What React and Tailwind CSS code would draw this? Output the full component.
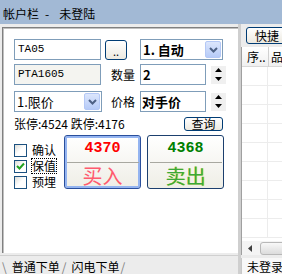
import React from "react";

const F = "font-['Noto_Sans_CJK_SC',sans-serif]";

function XPButton({ className = "", children }) {
  return (
    <div
      className={`flex items-center justify-center rounded-[3px] border border-[#003c74] bg-gradient-to-b from-white to-[#ece9e0] ${className}`}
    >
      {children}
    </div>
  );
}

function Chevron() {
  return (
    <svg width="9" height="6" viewBox="0 0 9 6">
      <path d="M1 1 L4.5 4.5 L8 1" stroke="#4d6185" strokeWidth="2" fill="none" />
    </svg>
  );
}

function Select({ className = "", text, bold }) {
  return (
    <div className={`flex h-[21px] items-center border border-[#7f9db9] bg-white ${className}`}>
      <span className={`flex-1 pl-[2px] text-[13px] leading-none text-black ${bold ? "font-bold" : ""}`}>{text}</span>
      <div className="mr-[1px] flex h-[17px] w-[16px] items-center justify-center rounded-[2px] border border-[#b4c8f6] bg-gradient-to-b from-[#dce6fc] to-[#b6cbf8]">
        <Chevron />
      </div>
    </div>
  );
}

function Spinner() {
  return (
    <div className="ml-[5px] flex h-[20px] w-[15px] flex-col justify-between py-[1px]">
      <div className="flex h-[9px] items-center justify-center bg-[#f0f0f0]">
        <svg width="7" height="4" viewBox="0 0 7 4">
          <path d="M3.5 0 L7 4 L0 4 Z" fill="#000" />
        </svg>
      </div>
      <div className="flex h-[9px] items-center justify-center bg-[#f0f0f0]">
        <svg width="7" height="4" viewBox="0 0 7 4">
          <path d="M0 0 L7 0 L3.5 4 Z" fill="#000" />
        </svg>
      </div>
    </div>
  );
}

function Checkbox({ checked, label, focus }) {
  return (
    <div className="flex h-[16px] items-center">
      <div className="flex h-[13px] w-[13px] items-center justify-center border border-[#1c5180] bg-gradient-to-br from-[#dcdcd7] via-white to-white">
        {checked && (
          <svg width="9" height="9" viewBox="0 0 9 9">
            <path d="M1 4 L3.5 6.5 L8 1.5" stroke="#21a121" strokeWidth="2" fill="none" />
          </svg>
        )}
      </div>
      <span
        className={`ml-[5px] text-[12px] leading-[14px] text-black ${
          focus ? "outline outline-1 outline-dotted outline-black" : ""
        }`}
      >
        {label}
      </span>
    </div>
  );
}

function TradeButton({ price, label, priceColor, labelClass, focus }) {
  return (
    <div
      className={`flex h-[54px] w-[77px] flex-col items-center rounded-[3px] border bg-gradient-to-b from-white to-[#efeee6] ${
        focus ? "border-[#2a4f9c] shadow-[inset_0_0_0_2px_#94b4f0]" : "border-[#1c3f6e]"
      }`}
    >
      <div className={`mt-[6px] h-[14px] font-['Liberation_Mono',monospace] text-[15px] font-bold leading-[14px] ${priceColor}`}>
        {price}
      </div>
      <div className="mt-[6px] h-px w-[72px] bg-[#a8a8a0]" />
      <div className={`mt-[2px] text-[20px] leading-[22px] ${labelClass}`}>{label}</div>
    </div>
  );
}

export default function App() {
  return (
    <div className={`${F} flex h-[274px] w-[282px] flex-col overflow-hidden bg-[#ececec] text-black`}>
      {/* title */}
      <div className="flex h-[24px] items-center bg-[#a2b9d5] pl-[3px] pt-[3px] text-[12px] leading-none">
        <span>帐户栏</span>
        <span className="ml-[6px]">-</span>
        <span className="ml-[10px]">未登陆</span>
      </div>
      <div className="flex flex-1">
        {/* left column */}
        <div className="flex w-[240px] flex-col">
          <div className="ml-[2px] mt-[3px] flex h-[226px] w-[236px] flex-col border-l border-t border-[#808080] border-b-white border-r-white bg-white">
            <div className="flex flex-1 flex-col border-l border-t border-[#c0c0c0] pl-[10px] pt-[10px]">
              {/* row 1 */}
              <div className="flex h-[21px] items-center">
                <div className="flex h-[21px] w-[87px] items-center border border-[#7f9db9] bg-white pl-[3px] font-['Liberation_Mono',monospace] text-[11px]">
                  TA05
                </div>
                <XPButton className="ml-[4px] h-[20px] w-[22px] items-end pb-[2px] text-[11px] leading-none">
                  ..
                </XPButton>
                <Select className="ml-[13px] w-[83px]" text="1. 自动" bold />
              </div>
              {/* row 2 */}
              <div className="mt-[4px] flex h-[21px] items-center">
                <div className="flex h-[21px] w-[87px] items-center border border-[#7f9db9] bg-[#f4f4f0] pl-[3px] font-['Liberation_Mono',monospace] text-[11px]">
                  PTA1605
                </div>
                <div className="w-[39px] pl-[10px] text-[12px]">数量</div>
                <div className="flex h-[21px] w-[66px] items-center border border-[#7f9db9] bg-white pl-[2px] text-[13px] font-bold">
                  2
                </div>
                <Spinner />
              </div>
              {/* row 3 */}
              <div className="mt-[6px] flex h-[21px] items-center">
                <Select className="w-[88px]" text="1.限价" />
                <div className="w-[38px] pl-[9px] text-[12px]">价格</div>
                <div className="flex h-[21px] w-[66px] items-center border border-[#7f9db9] bg-white pl-[1px] text-[13px] font-bold">
                  对手价
                </div>
                <Spinner />
              </div>
              {/* row 4 */}
              <div className="mt-[5px] flex h-[14px] items-center">
                <div className="w-[170px] text-[12px] leading-none">张停:4524 跌停:4176</div>
                <XPButton className="h-[14px] w-[39px] text-[12px] leading-none">查询</XPButton>
              </div>
              {/* row 5 */}
              <div className="mt-[4px] flex">
                <div className="flex w-[50px] flex-col pt-[7px]">
                  <Checkbox label="确认" />
                  <Checkbox label="保值" checked focus />
                  <Checkbox label="预埋" />
                </div>
                <TradeButton
                  price="4370"
                  label="买入"
                  priceColor="text-[#ff0000]"
                  labelClass="text-[#ff5a6e]"
                  focus
                />
                <div className="w-[6px]" />
                <TradeButton
                  price="4368"
                  label="卖出"
                  priceColor="text-[#008000]"
                  labelClass="text-[#3aa83a] [text-shadow:1px_0_0_#e8e050]"
                />
              </div>
            </div>
          </div>
          {/* tabs */}
          <div className="mt-[2px] flex h-[19px] items-end border-t border-[#d0d0d0] bg-[#ececec] text-[12px] leading-[14px]">
            <div className="flex h-[17px] items-end">
              <span className="ml-[2px] text-[#808080]">\</span>
              <span className="ml-[5px]">普通下单</span>
              <span className="ml-[2px] text-[#808080]">/</span>
              <span className="ml-[5px]">闪电下单</span>
              <span className="ml-[1px] text-[#808080]">/</span>
            </div>
          </div>
        </div>
        {/* right column */}
        <div className="flex flex-1 flex-col border-l-[3px] border-[#cfcfcf]">
          <div className="h-[3px]" />
          <XPButton className="ml-[5px] h-[17px] w-[50px] justify-start pl-[8px] text-[12px] leading-none">快捷</XPButton>
          <div className="mt-[3px] flex h-[194px] flex-col border-l border-[#a0a0a0] bg-white">
            <div className="flex h-[20px] items-center border-b border-[#d8d8d8] bg-gradient-to-b from-white to-[#f0f0f0] text-[12px]">
              <span className="ml-[5px] w-[21px]">序..</span>
              <span className="h-[20px] w-px bg-[#d0d0d0]" />
              <span className="ml-[2px]">品</span>
            </div>
            {[0, 1, 2, 3, 4, 5, 6, 7, 8].map((i) => (
              <div key={i} className="flex h-[19px] border-b border-[#ececec]">
                <div className="w-[26px] border-r border-[#ececec]" />
              </div>
            ))}
          </div>
          <div className="flex h-[14px] items-center border-l border-[#a0a0a0] bg-[#f4f4f4]">
            <div className="flex h-[14px] w-[16px] items-center justify-center">
              <svg width="4" height="7" viewBox="0 0 4 7">
                <path d="M4 0 L0 3.5 L4 7 Z" fill="#404040" />
              </svg>
            </div>
            <div className="ml-[2px] h-[13px] flex-1 rounded-l-[3px] border border-[#b8b8b8] bg-gradient-to-b from-[#f8f8f8] to-[#dcdcdc]" />
          </div>
          <div className="mt-[3px] flex flex-1 items-end border-l border-[#c8c8c8] bg-[#f8f8f8] pl-[5px] text-[12px] leading-[14px]">
            未登录
          </div>
        </div>
      </div>
    </div>
  );
}
